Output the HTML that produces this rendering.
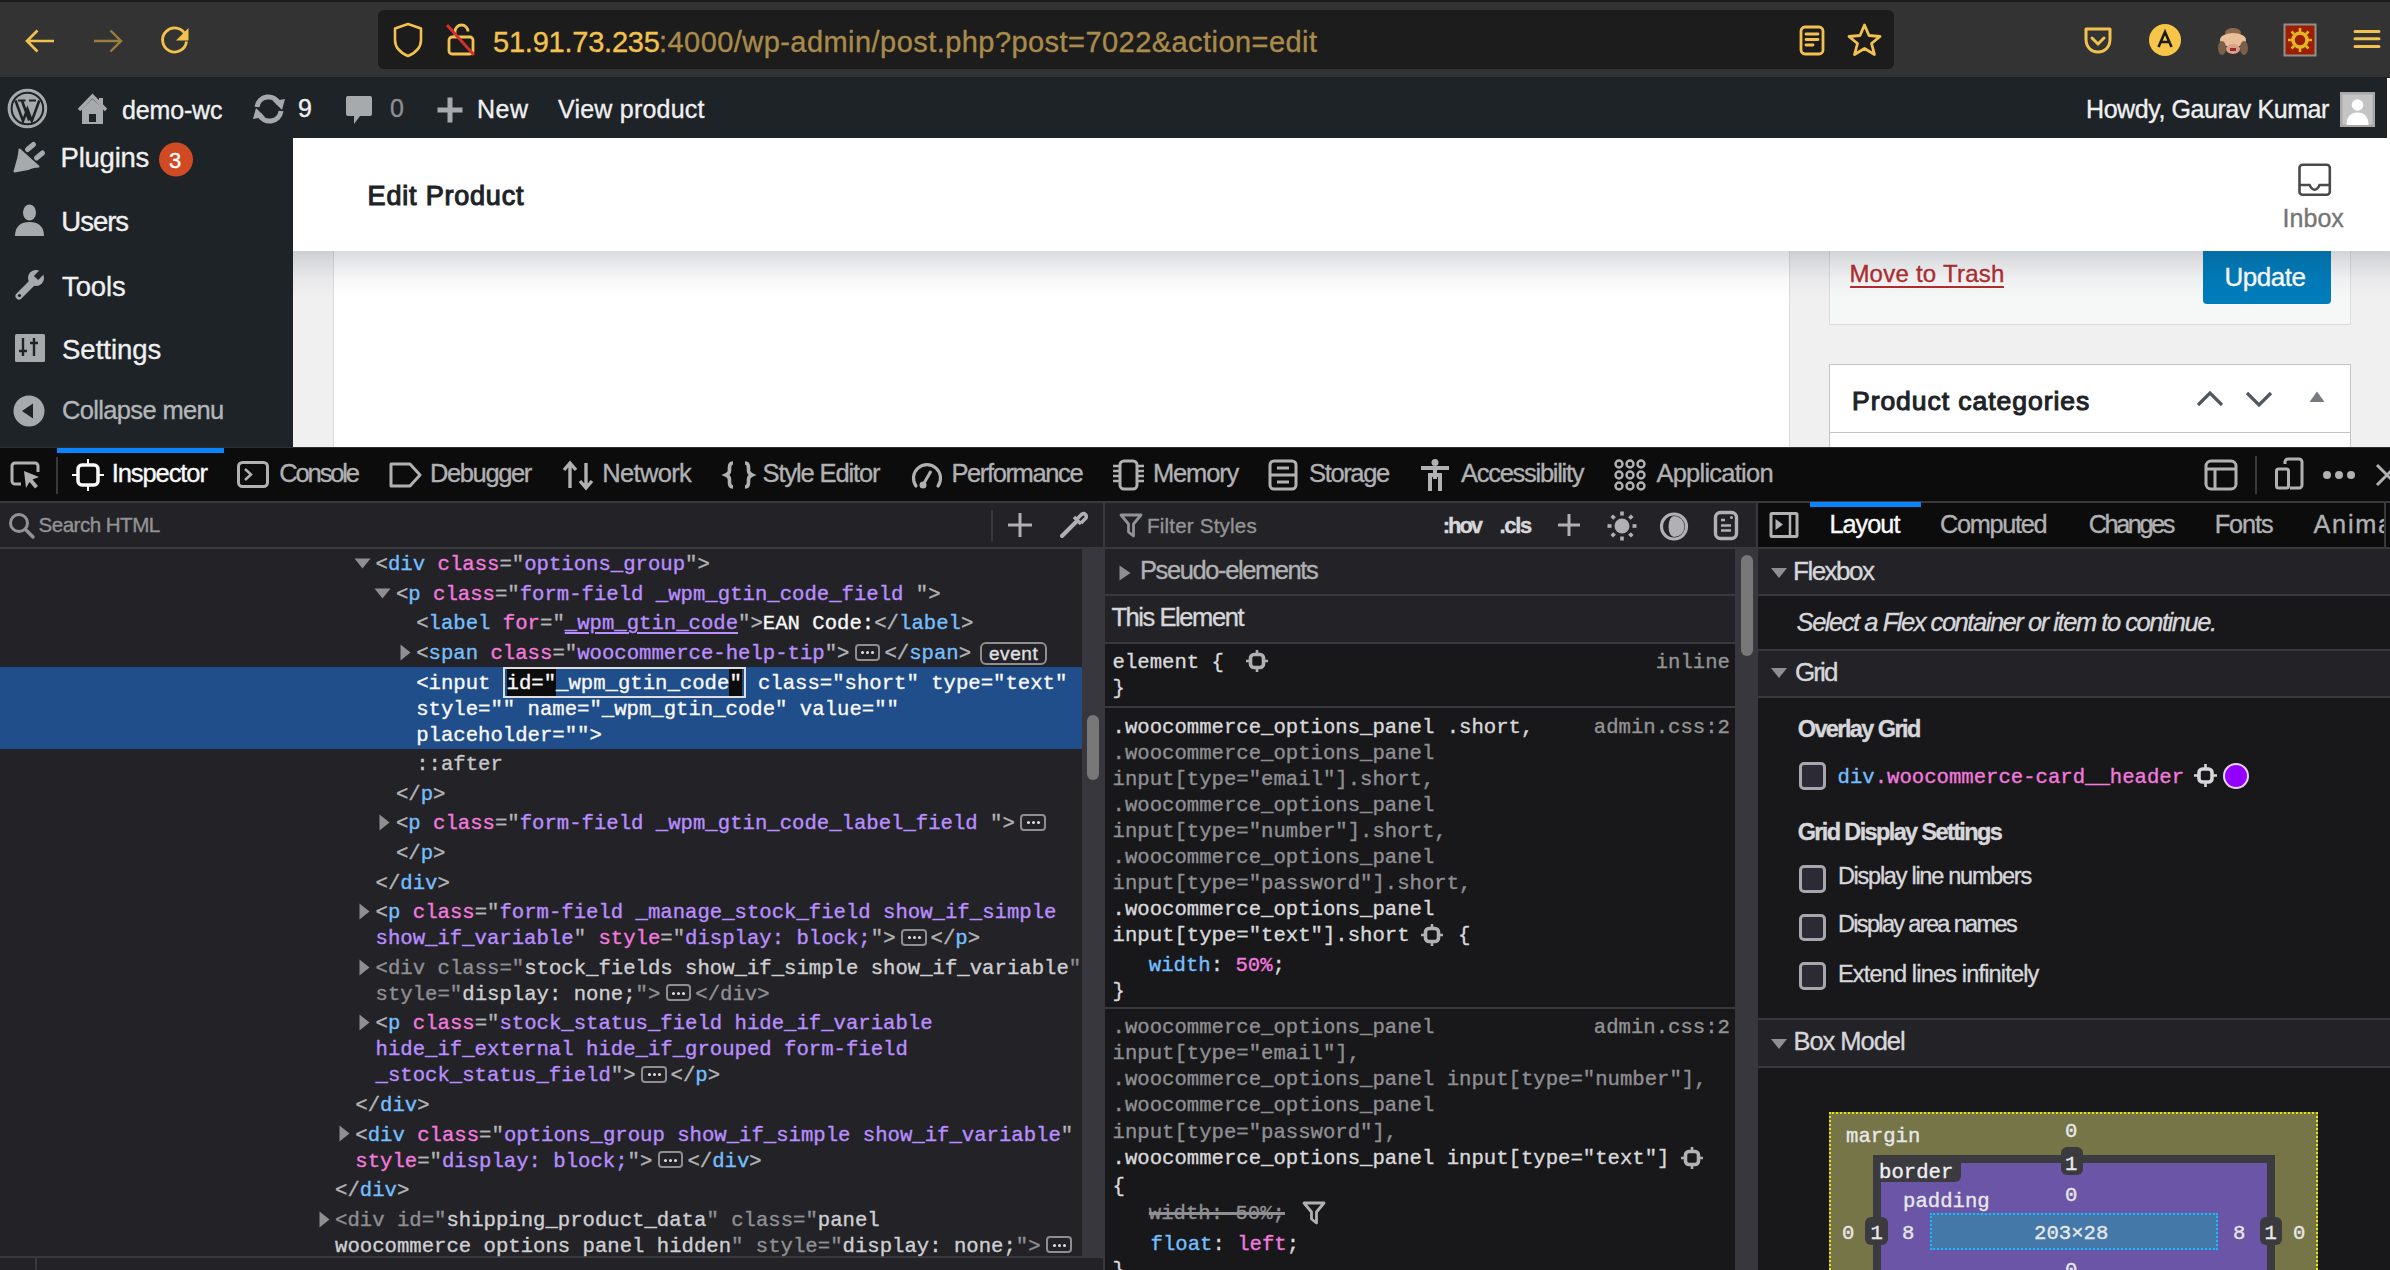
<!DOCTYPE html><html><head><meta charset="utf-8"><style>html,body{margin:0;padding:0;width:2390px;height:1270px;overflow:hidden;background:#232327;position:relative}body>*{box-sizing:border-box} div{-webkit-text-stroke:0.35px currentColor}</style></head><body>
<div style="position:absolute;left:0px;top:0px;width:2390px;height:78px;background:#333333;"></div>
<div style="position:absolute;left:0px;top:0px;width:2390px;height:2px;background:#1c1c1c;"></div>
<div style="position:absolute;left:0px;top:77px;width:2390px;height:1px;background:#1f1f1f;"></div>
<div style="position:absolute;left:378px;top:10px;width:1516px;height:59px;background:#1c1c1c;border-radius:6px;"></div>
<svg style="position:absolute;left:20px;top:24px;" width="40" height="36" viewBox="0 0 40 36"><path d="M34 17H7.5M17.5 6.5L7 17L17.5 27.5" fill="none" stroke="#f2c14e" stroke-width="2.7" stroke-linejoin="miter"/></svg>
<svg style="position:absolute;left:88px;top:24px;" width="40" height="36" viewBox="0 0 40 36"><path d="M6 17H32.5M22.5 6.5L33 17L22.5 27.5" fill="none" stroke="#9a7f3c" stroke-width="2.4" stroke-linejoin="miter"/></svg>
<svg style="position:absolute;left:156px;top:24px;" width="40" height="40" viewBox="0 0 40 40"><path d="M29.5 11A12 12 0 1 0 30.5 17.5" fill="none" stroke="#f2c14e" stroke-width="2.8"/><path d="M32.5 4V16.5H20Z" fill="#f2c14e"/></svg>
<svg style="position:absolute;left:390px;top:20px;" width="36" height="40" viewBox="0 0 36 40"><path d="M18 4L31 8.5V20C31 28 25 33 18 36C11 33 5 28 5 20V8.5Z" fill="none" stroke="#f2c14e" stroke-width="2.6" stroke-linejoin="round"/></svg>
<svg style="position:absolute;left:442px;top:20px;" width="38" height="40" viewBox="0 0 38 40"><path d="M13 17V11.5A6.5 6.5 0 0 1 26 11.5" fill="none" stroke="#f2c14e" stroke-width="2.8"/><rect x="7" y="17" width="24" height="17" rx="3" fill="none" stroke="#f2c14e" stroke-width="2.8"/><path d="M5 5L32 35" stroke="#d0312d" stroke-width="3"/></svg>
<svg style="position:absolute;left:1796px;top:22px;" width="32" height="36" viewBox="0 0 32 36"><rect x="5" y="5" width="22" height="27" rx="4" fill="none" stroke="#f2c14e" stroke-width="2.8"/><path d="M10 12H22M10 17.5H22M10 23H17" stroke="#f2c14e" stroke-width="2.8" stroke-linecap="round"/></svg>
<svg style="position:absolute;left:1845px;top:21px;" width="40" height="38" viewBox="0 0 40 38"><path d="M19.5 4L24 14.5L35 15.5L26.5 22.5L29.5 33.5L19.5 27.5L9.5 33.5L12.5 22.5L4 15.5L15 14.5Z" fill="none" stroke="#f2c14e" stroke-width="2.8" stroke-linejoin="round"/></svg>
<svg style="position:absolute;left:2080px;top:24px;" width="36" height="32" viewBox="0 0 36 32"><path d="M6 5H30V15C30 23 25 28 18 28C11 28 6 23 6 15Z" fill="none" stroke="#f2c14e" stroke-width="3" stroke-linejoin="round"/><path d="M12 14L18 20L24 14" fill="none" stroke="#f2c14e" stroke-width="3" stroke-linecap="round"/></svg>
<svg style="position:absolute;left:2147px;top:22px;" width="36" height="36" viewBox="0 0 36 36"><circle cx="18" cy="18" r="16" fill="#f7c547"/><path d="M11.5 25L18 10L24.5 25M13.8 20H22.2" fill="none" stroke="#1c1c1c" stroke-width="2.6"/></svg>
<svg style="position:absolute;left:2216px;top:24px;" width="34" height="34" viewBox="0 0 34 34"><ellipse cx="17" cy="9" rx="8" ry="5" fill="#8a6a4a"/><ellipse cx="17" cy="16" rx="13" ry="7" fill="#e8bf98"/><ellipse cx="17" cy="25" rx="7" ry="5" fill="#d9a08a"/><ellipse cx="6" cy="24" rx="4" ry="7" fill="#7a6048"/><ellipse cx="28" cy="24" rx="4" ry="7" fill="#7a6048"/><rect x="14" y="24" width="6" height="3" fill="#9b2a2a"/></svg>
<svg style="position:absolute;left:2282px;top:22px;" width="36" height="36" viewBox="0 0 36 36"><rect x="2.5" y="2.5" width="31" height="31" fill="#9d1f00" stroke="#8f8f8f" stroke-width="2"/><circle cx="18" cy="18" r="7" fill="none" stroke="#e2b628" stroke-width="3.5"/><path d="M18 6V10M18 26V30M6 18H10M26 18H30M9.5 9.5L12 12M24 24L26.5 26.5M9.5 26.5L12 24M24 12L26.5 9.5" stroke="#e2b628" stroke-width="2.5"/></svg>
<svg style="position:absolute;left:2350px;top:26px;" width="34" height="26" viewBox="0 0 34 26"><path d="M5 5.5H29M5 12.8H29M5 20.5H29" stroke="#f2c14e" stroke-width="3" stroke-linecap="round"/></svg>
<div style="position:absolute;left:493.00px;top:27.64px;font:normal normal 29px/29px 'Liberation Sans', sans-serif;color:#f2c14e;letter-spacing:-0.227px;white-space:pre;">51.91.73.235</div>
<div style="position:absolute;left:659.00px;top:27.64px;font:normal normal 29px/29px 'Liberation Sans', sans-serif;color:#a98b4c;letter-spacing:0.445px;white-space:pre;">:4000/wp-admin/post.php?post=7022&amp;action=edit</div>
<div style="position:absolute;left:0px;top:78px;width:2390px;height:60px;background:#1d2327;"></div>
<div style="position:absolute;left:2387px;top:78px;width:3px;height:60px;background:#ffffff;"></div>
<svg style="position:absolute;left:6px;top:87px;" width="43" height="43" viewBox="0 0 43 43"><circle cx="21.4" cy="21.5" r="18.3" fill="none" stroke="#a7aaad" stroke-width="3"/><circle cx="21.4" cy="21.5" r="14.8" fill="#a7aaad"/><path d="M9.5 13.5L17 34L21.4 22L25.8 34L33.3 13.5M15.8 13.2L23.2 33.5" fill="none" stroke="#1d2327" stroke-width="2.6"/><path d="M12 13.5H19.5M23 13.5H30" stroke="#1d2327" stroke-width="2.2"/></svg>
<svg style="position:absolute;left:77px;top:93px;" width="32" height="34" viewBox="0 0 32 34"><path d="M2 17L15.5 3L29 17" fill="none" stroke="#a7aaad" stroke-width="3.5"/><path d="M5 16L15.5 6L26 16V31H5Z" fill="#a7aaad"/><rect x="12" y="21" width="7" height="8" fill="#1d2327"/><rect x="22" y="5" width="4" height="8" fill="#a7aaad"/></svg>
<svg style="position:absolute;left:250px;top:93px;" width="38" height="32" viewBox="0 0 38 32"><path d="M7 14A11.5 11.5 0 0 1 29 11" fill="none" stroke="#a7aaad" stroke-width="5"/><path d="M31 18A11.5 11.5 0 0 1 9 21" fill="none" stroke="#a7aaad" stroke-width="5"/><path d="M23 8L35 6L32 17Z" fill="#a7aaad"/><path d="M15 24L3 26L6 15Z" fill="#a7aaad"/></svg>
<svg style="position:absolute;left:344px;top:93px;" width="30" height="34" viewBox="0 0 30 34"><path d="M4 3H26A2 2 0 0 1 28 5V21A2 2 0 0 1 26 23H16L10 31V23H4A2 2 0 0 1 2 21V5A2 2 0 0 1 4 3Z" fill="#a7aaad"/></svg>
<svg style="position:absolute;left:435px;top:95px;" width="30" height="30" viewBox="0 0 30 30"><path d="M15 2.5V27.5M2.5 15H27.5" stroke="#a7aaad" stroke-width="5"/></svg>
<div style="position:absolute;left:122.00px;top:97.50px;font:normal normal 25px/25px 'Liberation Sans', sans-serif;color:#f0f0f1;letter-spacing:-0.153px;white-space:pre;">demo-wc</div>
<div style="position:absolute;left:298.00px;top:96.00px;font:normal normal 25px/25px 'Liberation Sans', sans-serif;color:#f0f0f1;letter-spacing:0.000px;white-space:pre;">9</div>
<div style="position:absolute;left:390.00px;top:96.00px;font:normal normal 25px/25px 'Liberation Sans', sans-serif;color:#8c8f94;letter-spacing:0.000px;white-space:pre;">0</div>
<div style="position:absolute;left:477.00px;top:96.50px;font:normal normal 25px/25px 'Liberation Sans', sans-serif;color:#f0f0f1;letter-spacing:0.521px;white-space:pre;">New</div>
<div style="position:absolute;left:558.00px;top:96.50px;font:normal normal 25px/25px 'Liberation Sans', sans-serif;color:#f0f0f1;letter-spacing:0.225px;white-space:pre;">View product</div>
<div style="position:absolute;left:2086.00px;top:97.00px;font:normal normal 25px/25px 'Liberation Sans', sans-serif;color:#f0f0f1;letter-spacing:-0.427px;white-space:pre;">Howdy, Gaurav Kumar</div>
<svg style="position:absolute;left:2339.5px;top:91.5px;" width="35" height="35" viewBox="0 0 35 35"><rect x="1.2" y="1.2" width="32.6" height="32.6" fill="#c4c4c4" stroke="#a8a8a8" stroke-width="2.4"/><circle cx="17.5" cy="13" r="5.8" fill="#fff"/><path d="M6.5 33C6.5 24.5 11 20.5 17.5 20.5C24 20.5 28.5 24.5 28.5 33Z" fill="#fff"/></svg>
<div style="position:absolute;left:0px;top:138px;width:293px;height:309px;background:#1d2327;"></div>
<svg style="position:absolute;left:12px;top:140px;" width="36" height="36" viewBox="0 0 36 36"><path d="M2.5 31.5L6 19C7 15 7.5 12 7.5 9.5L26.5 26.5C24 26.5 20 27.5 16 29Z" fill="#a7aaad" stroke="#a7aaad" stroke-width="2" stroke-linejoin="round"/><path d="M15.5 9.5L21.5 4.5M24.5 18L30.5 13" stroke="#a7aaad" stroke-width="5" stroke-linecap="round"/></svg>
<div style="position:absolute;left:60.60px;top:143.90px;font:normal normal 27.5px/27.5px 'Liberation Sans', sans-serif;color:#f0f0f1;letter-spacing:-0.241px;white-space:pre;">Plugins</div>
<svg style="position:absolute;left:158px;top:142px;" width="36" height="36" viewBox="0 0 36 36"><circle cx="18" cy="17.5" r="17" fill="#d04b23"/></svg>
<div style="position:absolute;left:169.00px;top:149.52px;font:normal normal 22px/22px 'Liberation Sans', sans-serif;color:#ffffff;letter-spacing:0.000px;white-space:pre;">3</div>
<svg style="position:absolute;left:13px;top:203px;" width="33" height="36" viewBox="0 0 33 36"><ellipse cx="16.5" cy="9.5" rx="6.5" ry="8" fill="#a7aaad"/><path d="M2 33C2 23 8 19 16.5 19C25 19 31 23 31 33Z" fill="#a7aaad"/></svg>
<div style="position:absolute;left:61.30px;top:207.90px;font:normal normal 27.5px/27.5px 'Liberation Sans', sans-serif;color:#f0f0f1;letter-spacing:-1.015px;white-space:pre;">Users</div>
<svg style="position:absolute;left:12px;top:267px;" width="36" height="36" viewBox="0 0 36 36"><path d="M7 29L21 15" stroke="#a7aaad" stroke-width="7" stroke-linecap="round"/><circle cx="24" cy="11" r="8" fill="#a7aaad"/><path d="M24 11L33 2" stroke="#1d2327" stroke-width="6"/><circle cx="7.5" cy="28.5" r="1.6" fill="#1d2327"/></svg>
<div style="position:absolute;left:62.00px;top:272.90px;font:normal normal 27.5px/27.5px 'Liberation Sans', sans-serif;color:#f0f0f1;letter-spacing:-0.112px;white-space:pre;">Tools</div>
<svg style="position:absolute;left:13px;top:332px;" width="34" height="32" viewBox="0 0 34 32"><rect x="2" y="2" width="30" height="28" rx="1.5" fill="#a7aaad"/><path d="M10 6V24M21 6V24M6 19H14M17 11H25" stroke="#1d2327" stroke-width="2.4"/></svg>
<div style="position:absolute;left:62.00px;top:336.10px;font:normal normal 27.5px/27.5px 'Liberation Sans', sans-serif;color:#f0f0f1;letter-spacing:-0.002px;white-space:pre;">Settings</div>
<svg style="position:absolute;left:11px;top:394px;" width="36" height="36" viewBox="0 0 36 36"><circle cx="18" cy="17" r="15.5" fill="#a7aaad"/><path d="M22 9.5V24.5L11 17Z" fill="#1d2327"/></svg>
<div style="position:absolute;left:62.00px;top:397.58px;font:normal normal 25.5px/25.5px 'Liberation Sans', sans-serif;color:#b4b6b9;letter-spacing:-0.659px;white-space:pre;">Collapse menu</div>
<div style="position:absolute;left:293px;top:138px;width:2097px;height:113px;background:#ffffff;"></div>
<div style="position:absolute;left:367.60px;top:183.12px;font:normal normal 27px/27px 'Liberation Sans', sans-serif;color:#1d2327;letter-spacing:0.802px;white-space:pre;-webkit-text-stroke:1.1px #1d2327;">Edit Product</div>
<svg style="position:absolute;left:2294px;top:160px;" width="40" height="40" viewBox="0 0 40 40"><rect x="5.5" y="4.8" width="30.3" height="29.9" rx="3" fill="none" stroke="#4a4a4a" stroke-width="2.6"/><path d="M5.5 25H15.6C17 28 18.5 29.7 20.6 29.7C22.7 29.7 24.2 28 25.6 25H35.8" fill="none" stroke="#4a4a4a" stroke-width="2.6"/></svg>
<div style="position:absolute;left:2282.60px;top:205.70px;font:normal normal 25px/25px 'Liberation Sans', sans-serif;color:#757575;letter-spacing:0.011px;white-space:pre;">Inbox</div>
<div style="position:absolute;left:293px;top:251px;width:2097px;height:196px;background:#f0f0f1;"></div>
<div style="position:absolute;left:333px;top:251px;width:1457px;height:196px;background:#ffffff;border-left:1px solid #dcdcde;border-right:1px solid #dcdcde;"></div>
<div style="position:absolute;left:1829px;top:251px;width:522px;height:74px;background:#f6f7f7;border:1px solid #dcdcde;border-top:none;"></div>
<div style="position:absolute;left:1849.40px;top:261.84px;font:normal normal 24px/24px 'Liberation Sans', sans-serif;color:#b32d2e;letter-spacing:0.238px;white-space:pre;">Move to Trash</div>
<div style="position:absolute;left:1850px;top:285.5px;width:154px;height:2px;background:#b32d2e;"></div>
<div style="position:absolute;left:2203px;top:251px;width:128px;height:53px;background:#007cba;border-radius:0 0 4px 4px;"></div>
<div style="position:absolute;left:2224.50px;top:263.56px;font:normal normal 26px/26px 'Liberation Sans', sans-serif;color:#ffffff;letter-spacing:-0.476px;white-space:pre;">Update</div>
<div style="position:absolute;left:1829px;top:364px;width:522px;height:90px;background:#ffffff;border:1px solid #c3c4c7;"></div>
<div style="position:absolute;left:1830px;top:432px;width:520px;height:1px;background:#c3c4c7;"></div>
<div style="position:absolute;left:1852.00px;top:387.74px;font:normal normal 26.5px/26.5px 'Liberation Sans', sans-serif;color:#1d2327;letter-spacing:0.959px;white-space:pre;-webkit-text-stroke:1.1px #1d2327;">Product categories</div>
<svg style="position:absolute;left:2194px;top:387px;" width="32" height="24" viewBox="0 0 32 24"><path d="M4 18L16 6L28 18" fill="none" stroke="#50575e" stroke-width="3.2"/></svg>
<svg style="position:absolute;left:2243px;top:387px;" width="32" height="24" viewBox="0 0 32 24"><path d="M4 6L16 18L28 6" fill="none" stroke="#50575e" stroke-width="3.2"/></svg>
<svg style="position:absolute;left:2306px;top:388px;" width="22" height="18" viewBox="0 0 22 18"><path d="M3.5 14H18.5L11 3.5Z" fill="#787c82"/></svg>
<div style="position:absolute;left:293px;top:251px;width:2097px;height:48px;background:linear-gradient(to bottom, rgba(20,30,50,0.16), rgba(20,30,50,0.10) 25%, rgba(20,30,50,0.03) 60%, rgba(20,30,50,0));"></div>
<div style="position:absolute;left:0px;top:447px;width:2390px;height:823px;background:#232327;"></div>
<div style="position:absolute;left:0px;top:447px;width:2390px;height:54px;background:#0c0c0d;"></div>
<div style="position:absolute;left:0px;top:447px;width:2390px;height:1px;background:#2e2e33;"></div>
<div style="position:absolute;left:57px;top:448px;width:167px;height:5px;background:#0a84ff;"></div>
<div style="position:absolute;left:0px;top:501px;width:2390px;height:2px;background:#38383d;"></div>
<svg style="position:absolute;left:8px;top:459px;" width="36" height="32" viewBox="0 0 36 32"><path d="M13 25H7A3 3 0 0 1 4 22V7A3 3 0 0 1 7 4H27A3 3 0 0 1 30 7V13" fill="none" stroke="#b1b1b3" stroke-width="3"/><path d="M16 12L31 18L24.5 20.5L30 27L27 29.5L21.5 23L18 29Z" fill="#b1b1b3"/></svg>
<div style="position:absolute;left:55.5px;top:457px;width:2px;height:37px;background:#38383d;"></div>
<svg style="position:absolute;left:70px;top:457px;" width="36" height="36" viewBox="0 0 36 36"><rect x="8" y="8" width="20" height="20" rx="4" fill="none" stroke="#f9f9fa" stroke-width="3.5"/><path d="M18 2V7M18 29V34M2 18H7M29 18H34" stroke="#f9f9fa" stroke-width="2"/></svg>
<div style="position:absolute;left:111.80px;top:461.28px;font:normal normal 25.5px/25.5px 'Liberation Sans', sans-serif;color:#f9f9fa;letter-spacing:-1.100px;white-space:pre;">Inspector</div>
<svg style="position:absolute;left:235px;top:459px;" width="36" height="32" viewBox="0 0 36 32"><rect x="3.5" y="3.5" width="29" height="24" rx="4" fill="none" stroke="#b1b1b3" stroke-width="3"/><path d="M10 10L16 15.5L10 21" fill="none" stroke="#b1b1b3" stroke-width="2.5"/></svg>
<div style="position:absolute;left:279.30px;top:461.28px;font:normal normal 25.5px/25.5px 'Liberation Sans', sans-serif;color:#b1b1b3;letter-spacing:-2.146px;white-space:pre;">Console</div>
<svg style="position:absolute;left:387px;top:459px;" width="38" height="32" viewBox="0 0 38 32"><path d="M4 5H23L33 16L23 27H4Z" fill="none" stroke="#b1b1b3" stroke-width="3" stroke-linejoin="round"/></svg>
<div style="position:absolute;left:430.00px;top:461.28px;font:normal normal 25.5px/25.5px 'Liberation Sans', sans-serif;color:#b1b1b3;letter-spacing:-1.387px;white-space:pre;">Debugger</div>
<svg style="position:absolute;left:560px;top:457px;" width="36" height="36" viewBox="0 0 36 36"><path d="M10 31V7M4 13L10 6L16 13M26 6V30M20 24L26 31L32 24" fill="none" stroke="#b1b1b3" stroke-width="3.4"/></svg>
<div style="position:absolute;left:602.30px;top:461.28px;font:normal normal 25.5px/25.5px 'Liberation Sans', sans-serif;color:#b1b1b3;letter-spacing:-0.678px;white-space:pre;">Network</div>
<svg style="position:absolute;left:721px;top:457px;" width="36" height="36" viewBox="0 0 36 36"><path d="M12 6C8 6 8.5 10 8.5 13.5C8.5 16.5 5 18 5 18C5 18 8.5 19.5 8.5 22.5C8.5 26 8 30 12 30M24 6C28 6 27.5 10 27.5 13.5C27.5 16.5 31 18 31 18C31 18 27.5 19.5 27.5 22.5C27.5 26 28 30 24 30" fill="none" stroke="#b1b1b3" stroke-width="3.6"/></svg>
<div style="position:absolute;left:762.60px;top:461.28px;font:normal normal 25.5px/25.5px 'Liberation Sans', sans-serif;color:#b1b1b3;letter-spacing:-1.136px;white-space:pre;">Style Editor</div>
<svg style="position:absolute;left:909px;top:457px;" width="36" height="36" viewBox="0 0 36 36"><path d="M7 29A13.5 13.5 0 1 1 29 29" fill="none" stroke="#b1b1b3" stroke-width="3.2" stroke-linecap="round"/><path d="M14 28L22 14" stroke="#b1b1b3" stroke-width="3"/><circle cx="14" cy="28" r="3.5" fill="#b1b1b3"/></svg>
<div style="position:absolute;left:951.40px;top:461.28px;font:normal normal 25.5px/25.5px 'Liberation Sans', sans-serif;color:#b1b1b3;letter-spacing:-1.380px;white-space:pre;">Performance</div>
<svg style="position:absolute;left:1110px;top:457px;" width="37" height="36" viewBox="0 0 37 36"><rect x="10" y="4" width="17" height="28" rx="4" fill="none" stroke="#b1b1b3" stroke-width="3"/><path d="M3 9H9M3 14H9M3 19H9M3 24H9M28 9H34M28 14H34M28 19H34M28 24H34" stroke="#b1b1b3" stroke-width="2.5"/></svg>
<div style="position:absolute;left:1152.90px;top:461.28px;font:normal normal 25.5px/25.5px 'Liberation Sans', sans-serif;color:#b1b1b3;letter-spacing:-1.128px;white-space:pre;">Memory</div>
<svg style="position:absolute;left:1266px;top:457px;" width="34" height="36" viewBox="0 0 34 36"><rect x="4" y="4" width="26" height="28" rx="4" fill="none" stroke="#b1b1b3" stroke-width="3"/><path d="M4 18H30M11 11H23M11 25H23" stroke="#b1b1b3" stroke-width="3"/></svg>
<div style="position:absolute;left:1309.00px;top:461.28px;font:normal normal 25.5px/25.5px 'Liberation Sans', sans-serif;color:#b1b1b3;letter-spacing:-1.355px;white-space:pre;">Storage</div>
<svg style="position:absolute;left:1418px;top:457px;" width="34" height="36" viewBox="0 0 34 36"><circle cx="17" cy="5.5" r="3.5" fill="#b1b1b3"/><path d="M3 11H31M17 11V22M12 34V18H22V34" fill="none" stroke="#b1b1b3" stroke-width="4"/></svg>
<div style="position:absolute;left:1461.00px;top:461.28px;font:normal normal 25.5px/25.5px 'Liberation Sans', sans-serif;color:#b1b1b3;letter-spacing:-1.276px;white-space:pre;">Accessibility</div>
<svg style="position:absolute;left:1613px;top:457px;" width="35" height="36" viewBox="0 0 35 36"><circle cx="6" cy="7" r="3.5" fill="none" stroke="#b1b1b3" stroke-width="2.4"/><circle cx="6" cy="18" r="3.5" fill="none" stroke="#b1b1b3" stroke-width="2.4"/><circle cx="6" cy="29" r="3.5" fill="none" stroke="#b1b1b3" stroke-width="2.4"/><circle cx="17" cy="7" r="3.5" fill="none" stroke="#b1b1b3" stroke-width="2.4"/><circle cx="17" cy="18" r="3.5" fill="none" stroke="#b1b1b3" stroke-width="2.4"/><circle cx="17" cy="29" r="3.5" fill="none" stroke="#b1b1b3" stroke-width="2.4"/><circle cx="28" cy="7" r="3.5" fill="none" stroke="#b1b1b3" stroke-width="2.4"/><circle cx="28" cy="18" r="3.5" fill="none" stroke="#b1b1b3" stroke-width="2.4"/><circle cx="28" cy="29" r="3.5" fill="none" stroke="#b1b1b3" stroke-width="2.4"/></svg>
<div style="position:absolute;left:1656.40px;top:461.28px;font:normal normal 25.5px/25.5px 'Liberation Sans', sans-serif;color:#b1b1b3;letter-spacing:-0.757px;white-space:pre;">Application</div>
<svg style="position:absolute;left:2202px;top:457px;" width="38" height="36" viewBox="0 0 38 36"><rect x="4" y="4" width="30" height="28" rx="5" fill="none" stroke="#b1b1b3" stroke-width="3"/><path d="M4 12H34M13 12V32" stroke="#b1b1b3" stroke-width="3"/></svg>
<div style="position:absolute;left:2254.5px;top:456px;width:2px;height:38px;background:#38383d;"></div>
<svg style="position:absolute;left:2272px;top:457px;" width="36" height="36" viewBox="0 0 36 36"><path d="M13 7V5A3 3 0 0 1 16 2H27A3 3 0 0 1 30 5V28A3 3 0 0 1 27 31H18" fill="none" stroke="#b1b1b3" stroke-width="3"/><rect x="4.5" y="12" width="12" height="19" rx="2" fill="none" stroke="#b1b1b3" stroke-width="3"/></svg>
<svg style="position:absolute;left:2320px;top:463px;" width="38" height="24" viewBox="0 0 38 24"><circle cx="7" cy="12" r="4" fill="#b1b1b3"/><circle cx="19" cy="12" r="4" fill="#b1b1b3"/><circle cx="31" cy="12" r="4" fill="#b1b1b3"/></svg>
<svg style="position:absolute;left:2372px;top:460px;" width="18" height="30" viewBox="0 0 18 30"><path d="M5 5L25 25M25 5L5 25" stroke="#b1b1b3" stroke-width="3"/></svg>
<div style="position:absolute;left:0px;top:503px;width:1757px;height:44px;background:#232327;"></div>
<div style="position:absolute;left:1758px;top:503px;width:632px;height:44px;background:#0c0c0d;"></div>
<div style="position:absolute;left:0px;top:547px;width:2390px;height:2px;background:#38383d;"></div>
<div style="position:absolute;left:1103px;top:503px;width:2px;height:767px;background:#38383d;"></div>
<div style="position:absolute;left:1756px;top:503px;width:2px;height:767px;background:#38383d;"></div>
<svg style="position:absolute;left:6px;top:510px;" width="32" height="32" viewBox="0 0 32 32"><circle cx="13" cy="13" r="8.5" fill="none" stroke="#939395" stroke-width="3"/><path d="M19.5 19.5L27 27" stroke="#939395" stroke-width="3.5" stroke-linecap="round"/></svg>
<div style="position:absolute;left:38.50px;top:514.70px;font:normal normal 20.6px/20.6px 'Liberation Sans', sans-serif;color:#939395;letter-spacing:-0.528px;white-space:pre;">Search HTML</div>
<div style="position:absolute;left:991px;top:510px;width:2px;height:31px;background:#38383d;"></div>
<svg style="position:absolute;left:1004px;top:509px;" width="32" height="32" viewBox="0 0 32 32"><path d="M16 4V28M4 16H28" stroke="#b1b1b3" stroke-width="3"/></svg>
<svg style="position:absolute;left:1057px;top:509px;" width="32" height="32" viewBox="0 0 32 32"><path d="M5 27L19 13" stroke="#b1b1b3" stroke-width="4" stroke-linecap="round"/><path d="M17 8L24 15M20 10L25 5A3 3 0 0 1 29 9L24 14" fill="none" stroke="#b1b1b3" stroke-width="3.5"/></svg>
<svg style="position:absolute;left:1118px;top:511px;" width="26" height="28" viewBox="0 0 26 28"><path d="M3 4H23L15.5 13V25L10.5 21V13Z" fill="none" stroke="#939395" stroke-width="2.8" stroke-linejoin="round"/></svg>
<div style="position:absolute;left:1147.00px;top:515.70px;font:normal normal 20.6px/20.6px 'Liberation Sans', sans-serif;color:#939395;letter-spacing:0.186px;white-space:pre;">Filter Styles</div>
<div style="position:absolute;left:1442.80px;top:514.52px;font:normal bold 22px/22px 'Liberation Sans', sans-serif;color:#d7d7db;letter-spacing:-2.068px;white-space:pre;">:hov</div>
<div style="position:absolute;left:1499.50px;top:514.52px;font:normal bold 22px/22px 'Liberation Sans', sans-serif;color:#d7d7db;letter-spacing:-1.320px;white-space:pre;">.cls</div>
<svg style="position:absolute;left:1554px;top:509px;" width="30" height="32" viewBox="0 0 30 32"><path d="M15 5V27M4 16H26" stroke="#b1b1b3" stroke-width="3"/></svg>
<svg style="position:absolute;left:1604px;top:508px;" width="36" height="36" viewBox="0 0 36 36"><circle cx="18" cy="18" r="7.5" fill="#b1b1b3"/><path d="M28.5 18.0L32.5 18.0" stroke="#b1b1b3" stroke-width="3.6"/><path d="M25.4 25.4L28.3 28.3" stroke="#b1b1b3" stroke-width="3.6"/><path d="M18.0 28.5L18.0 32.5" stroke="#b1b1b3" stroke-width="3.6"/><path d="M10.6 25.4L7.7 28.3" stroke="#b1b1b3" stroke-width="3.6"/><path d="M7.5 18.0L3.5 18.0" stroke="#b1b1b3" stroke-width="3.6"/><path d="M10.6 10.6L7.7 7.7" stroke="#b1b1b3" stroke-width="3.6"/><path d="M18.0 7.5L18.0 3.5" stroke="#b1b1b3" stroke-width="3.6"/><path d="M25.4 10.6L28.3 7.7" stroke="#b1b1b3" stroke-width="3.6"/></svg>
<svg style="position:absolute;left:1656px;top:508px;" width="36" height="36" viewBox="0 0 36 36"><circle cx="18" cy="18.5" r="12.5" fill="none" stroke="#b1b1b3" stroke-width="3.2"/><path d="M18 8A10.5 10.5 0 0 1 18 29A5.5 10.5 0 0 1 18 8Z" fill="#b1b1b3"/></svg>
<svg style="position:absolute;left:1709px;top:508px;" width="34" height="36" viewBox="0 0 34 36"><rect x="6.5" y="4.5" width="21" height="26" rx="5" fill="none" stroke="#b1b1b3" stroke-width="3.4"/><path d="M12 12H16M12 17.5H22M12 22.5H22" stroke="#b1b1b3" stroke-width="2.6"/><circle cx="22.5" cy="9.5" r="1.5" fill="#b1b1b3"/></svg>
<svg style="position:absolute;left:1767px;top:510px;" width="34" height="30" viewBox="0 0 34 30"><rect x="4" y="3.5" width="26" height="23" rx="1" fill="none" stroke="#b1b1b3" stroke-width="3"/><path d="M23 4V26" stroke="#b1b1b3" stroke-width="2.5"/><path d="M8.5 9V20L16 14.5Z" fill="#b1b1b3"/></svg>
<div style="position:absolute;left:1810px;top:502px;width:111px;height:5px;background:#0a84ff;"></div>
<div style="position:absolute;left:1829.40px;top:511.75px;font:normal normal 25.3px/25.3px 'Liberation Sans', sans-serif;color:#f9f9fa;letter-spacing:-0.985px;white-space:pre;">Layout</div>
<div style="position:absolute;left:1940.00px;top:511.75px;font:normal normal 25.3px/25.3px 'Liberation Sans', sans-serif;color:#b1b1b3;letter-spacing:-1.321px;white-space:pre;">Computed</div>
<div style="position:absolute;left:2088.70px;top:511.75px;font:normal normal 25.3px/25.3px 'Liberation Sans', sans-serif;color:#b1b1b3;letter-spacing:-2.436px;white-space:pre;">Changes</div>
<div style="position:absolute;left:2214.70px;top:511.75px;font:normal normal 25.3px/25.3px 'Liberation Sans', sans-serif;color:#b1b1b3;letter-spacing:-1.080px;white-space:pre;">Fonts</div>
<div style="position:absolute;left:2300px;top:503px;width:84px;height:44px;overflow:hidden">
<div style="position:absolute;left:13.50px;top:8.75px;font:normal normal 25.3px/25.3px 'Liberation Sans', sans-serif;color:#b1b1b3;letter-spacing:1.723px;white-space:pre;">Animations</div>
</div>
<div style="position:absolute;left:2384px;top:503px;width:2px;height:44px;background:#38383d;"></div>
<div style="position:absolute;left:1082px;top:549px;width:23px;height:707px;background:#38373d;"></div>
<div style="position:absolute;left:1087.3px;top:715px;width:12px;height:65px;background:#787878;border-radius:6px;"></div>
<div style="position:absolute;left:0px;top:667px;width:1082px;height:82px;background:#204e8a;"></div>
<div style="position:absolute;left:0px;top:1256px;width:2390px;height:2px;background:#38383d;"></div>
<div style="position:absolute;left:35px;top:1258px;width:2px;height:12px;background:#38383d;"></div>
<div style="position:absolute;left:1105px;top:549px;width:630px;height:45px;background:#232327;"></div>
<div style="position:absolute;left:1105px;top:594px;width:630px;height:2px;background:#38383d;"></div>
<div style="position:absolute;left:1105px;top:596px;width:630px;height:46px;background:#232327;"></div>
<div style="position:absolute;left:1105px;top:642px;width:630px;height:2px;background:#38383d;"></div>
<div style="position:absolute;left:1105px;top:644px;width:630px;height:62px;background:#18181a;"></div>
<div style="position:absolute;left:1105px;top:706px;width:630px;height:2px;background:#38383d;"></div>
<div style="position:absolute;left:1105px;top:708px;width:630px;height:299px;background:#18181a;"></div>
<div style="position:absolute;left:1105px;top:1007px;width:630px;height:2px;background:#38383d;"></div>
<div style="position:absolute;left:1105px;top:1009px;width:630px;height:261px;background:#18181a;"></div>
<div style="position:absolute;left:1735px;top:549px;width:23px;height:721px;background:#38373d;"></div>
<div style="position:absolute;left:1741px;top:555px;width:12px;height:101px;background:#787878;border-radius:6px;"></div>
<div style="position:absolute;left:1758px;top:549px;width:632px;height:45px;background:#232327;"></div>
<div style="position:absolute;left:1758px;top:594px;width:632px;height:2px;background:#38383d;"></div>
<div style="position:absolute;left:1758px;top:596px;width:632px;height:53px;background:#18181a;"></div>
<div style="position:absolute;left:1758px;top:649px;width:632px;height:2px;background:#38383d;"></div>
<div style="position:absolute;left:1758px;top:651px;width:632px;height:45px;background:#232327;"></div>
<div style="position:absolute;left:1758px;top:696px;width:632px;height:2px;background:#38383d;"></div>
<div style="position:absolute;left:1758px;top:698px;width:632px;height:320px;background:#18181a;"></div>
<div style="position:absolute;left:1758px;top:1018px;width:632px;height:2px;background:#38383d;"></div>
<div style="position:absolute;left:1758px;top:1020px;width:632px;height:46px;background:#232327;"></div>
<div style="position:absolute;left:1758px;top:1066px;width:632px;height:2px;background:#38383d;"></div>
<div style="position:absolute;left:1758px;top:1068px;width:632px;height:202px;background:#18181a;"></div>
<svg style="position:absolute;left:354.1px;top:557px;" width="17" height="12" viewBox="0 0 17 12"><path d="M0.5 1.5H16.5L8.5 11.5Z" fill="#8f8f92"/></svg>
<div style="position:absolute;left:375.60px;top:552.26px;font:20.630px/26px 'Liberation Mono', monospace;white-space:pre;"><span style="color:#b4b4b8;">&lt;</span><span style="color:#75bfff;">div</span><span style="color:#b4b4b8;"> </span><span style="color:#f27ade;">class</span><span style="color:#b4b4b8;">=&quot;</span><span style="color:#b98eff;">options_group</span><span style="color:#b4b4b8;">&quot;</span><span style="color:#b4b4b8;">&gt;</span></div>
<svg style="position:absolute;left:374.4px;top:586.6px;" width="17" height="12" viewBox="0 0 17 12"><path d="M0.5 1.5H16.5L8.5 11.5Z" fill="#8f8f92"/></svg>
<div style="position:absolute;left:395.90px;top:581.86px;font:20.630px/26px 'Liberation Mono', monospace;white-space:pre;"><span style="color:#b4b4b8;">&lt;</span><span style="color:#75bfff;">p</span><span style="color:#b4b4b8;"> </span><span style="color:#f27ade;">class</span><span style="color:#b4b4b8;">=&quot;</span><span style="color:#b98eff;">form-field _wpm_gtin_code_field </span><span style="color:#b4b4b8;">&quot;</span><span style="color:#b4b4b8;">&gt;</span></div>
<div style="position:absolute;left:416.20px;top:611.46px;font:20.630px/26px 'Liberation Mono', monospace;white-space:pre;"><span style="color:#b4b4b8;">&lt;</span><span style="color:#75bfff;">label</span><span style="color:#b4b4b8;"> </span><span style="color:#f27ade;">for</span><span style="color:#b4b4b8;">=&quot;</span><span style="color:#b98eff;text-decoration:underline;text-decoration-thickness:2px;text-underline-offset:3px">_wpm_gtin_code</span><span style="color:#b4b4b8;">&quot;</span><span style="color:#b4b4b8;">&gt;</span><span style="color:#f9f9fa;">EAN Code:</span><span style="color:#b4b4b8;">&lt;/</span><span style="color:#75bfff;">label</span><span style="color:#b4b4b8;">&gt;</span></div>
<svg style="position:absolute;left:399.7px;top:643.8000000000001px;" width="11" height="17" viewBox="0 0 11 17"><path d="M0.5 0.5V16.5L10.5 8.5Z" fill="#8f8f92"/></svg>
<div style="position:absolute;left:416.20px;top:641.06px;font:20.630px/26px 'Liberation Mono', monospace;white-space:pre;"><span style="color:#b4b4b8;">&lt;</span><span style="color:#75bfff;">span</span><span style="color:#b4b4b8;"> </span><span style="color:#f27ade;">class</span><span style="color:#b4b4b8;">=&quot;</span><span style="color:#b98eff;">woocommerce-help-tip</span><span style="color:#b4b4b8;">&quot;</span><span style="color:#b4b4b8;">&gt;</span><span style="display:inline-block;box-sizing:border-box;width:25.5px;height:17px;margin:0 4px 0 5.5px;border:2px solid #8e8e91;border-radius:4px;vertical-align:-1.5px;position:relative"><span style="position:absolute;left:9.5px;top:5.5px;width:3px;height:3px;background:#e0e0e2;border-radius:2px;box-shadow:-5px 0 #e0e0e2,5px 0 #e0e0e2"></span></span><span style="color:#b4b4b8;">&lt;/</span><span style="color:#75bfff;">span</span><span style="color:#b4b4b8;">&gt;</span><span style="display:inline-block;box-sizing:border-box;width:67.5px;height:23px;margin-left:8.8px;border:2px solid #8e8e91;border-radius:6px;vertical-align:-1px;font:19px/19px 'Liberation Sans', sans-serif;color:#e0e0e2;text-align:center;letter-spacing:0.6px">event</span></div>
<div style="position:absolute;left:416.20px;top:670.66px;font:20.630px/26px 'Liberation Mono', monospace;white-space:pre;"><span style="color:#f9f9fa;">&lt;input </span><span style="display:inline-block;border:2px solid #dedee0;padding:0 1.75px;line-height:25px;vertical-align:0;margin:-6px 0 -2px 0"><span style="background:#0c0c0d;color:#f9f9fa;display:inline-block;padding-top:1.5px">id="</span><span style="color:#f9f9fa;display:inline-block;padding-top:1.5px">_wpm_gtin_code</span><span style="background:#0c0c0d;color:#f9f9fa;display:inline-block;padding-top:1.5px">"</span></span><span style="color:#f9f9fa;"> class=&quot;short&quot; type=&quot;text&quot;</span></div>
<div style="position:absolute;left:416.20px;top:696.66px;font:20.630px/26px 'Liberation Mono', monospace;white-space:pre;"><span style="color:#f9f9fa;">style=&quot;&quot; name=&quot;_wpm_gtin_code&quot; value=&quot;&quot;</span></div>
<div style="position:absolute;left:416.20px;top:722.66px;font:20.630px/26px 'Liberation Mono', monospace;white-space:pre;"><span style="color:#f9f9fa;">placeholder=&quot;&quot;&gt;</span></div>
<div style="position:absolute;left:416.20px;top:752.26px;font:20.630px/26px 'Liberation Mono', monospace;white-space:pre;"><span style="color:#c8c8cc;">::after</span></div>
<div style="position:absolute;left:395.90px;top:781.86px;font:20.630px/26px 'Liberation Mono', monospace;white-space:pre;"><span style="color:#b4b4b8;">&lt;/</span><span style="color:#75bfff;">p</span><span style="color:#b4b4b8;">&gt;</span></div>
<svg style="position:absolute;left:379.4px;top:814.2000000000002px;" width="11" height="17" viewBox="0 0 11 17"><path d="M0.5 0.5V16.5L10.5 8.5Z" fill="#8f8f92"/></svg>
<div style="position:absolute;left:395.90px;top:811.46px;font:20.630px/26px 'Liberation Mono', monospace;white-space:pre;"><span style="color:#b4b4b8;">&lt;</span><span style="color:#75bfff;">p</span><span style="color:#b4b4b8;"> </span><span style="color:#f27ade;">class</span><span style="color:#b4b4b8;">=&quot;</span><span style="color:#b98eff;">form-field _wpm_gtin_code_label_field </span><span style="color:#b4b4b8;">&quot;</span><span style="color:#b4b4b8;">&gt;</span><span style="display:inline-block;box-sizing:border-box;width:25.5px;height:17px;margin:0 4px 0 5.5px;border:2px solid #8e8e91;border-radius:4px;vertical-align:-1.5px;position:relative"><span style="position:absolute;left:9.5px;top:5.5px;width:3px;height:3px;background:#e0e0e2;border-radius:2px;box-shadow:-5px 0 #e0e0e2,5px 0 #e0e0e2"></span></span></div>
<div style="position:absolute;left:395.90px;top:841.06px;font:20.630px/26px 'Liberation Mono', monospace;white-space:pre;"><span style="color:#b4b4b8;">&lt;/</span><span style="color:#75bfff;">p</span><span style="color:#b4b4b8;">&gt;</span></div>
<div style="position:absolute;left:375.60px;top:870.66px;font:20.630px/26px 'Liberation Mono', monospace;white-space:pre;"><span style="color:#b4b4b8;">&lt;/</span><span style="color:#75bfff;">div</span><span style="color:#b4b4b8;">&gt;</span></div>
<svg style="position:absolute;left:359.1px;top:903.0000000000002px;" width="11" height="17" viewBox="0 0 11 17"><path d="M0.5 0.5V16.5L10.5 8.5Z" fill="#8f8f92"/></svg>
<div style="position:absolute;left:375.60px;top:900.26px;font:20.630px/26px 'Liberation Mono', monospace;white-space:pre;"><span style="color:#b4b4b8;">&lt;</span><span style="color:#75bfff;">p</span><span style="color:#b4b4b8;"> </span><span style="color:#f27ade;">class</span><span style="color:#b4b4b8;">=&quot;</span><span style="color:#b98eff;">form-field _manage_stock_field show_if_simple</span></div>
<div style="position:absolute;left:375.60px;top:926.26px;font:20.630px/26px 'Liberation Mono', monospace;white-space:pre;"><span style="color:#b98eff;">show_if_variable</span><span style="color:#b4b4b8;">&quot;</span><span style="color:#b4b4b8;"> </span><span style="color:#f27ade;">style</span><span style="color:#b4b4b8;">=&quot;</span><span style="color:#b98eff;">display: block;</span><span style="color:#b4b4b8;">&quot;</span><span style="color:#b4b4b8;">&gt;</span><span style="display:inline-block;box-sizing:border-box;width:25.5px;height:17px;margin:0 4px 0 5.5px;border:2px solid #8e8e91;border-radius:4px;vertical-align:-1.5px;position:relative"><span style="position:absolute;left:9.5px;top:5.5px;width:3px;height:3px;background:#e0e0e2;border-radius:2px;box-shadow:-5px 0 #e0e0e2,5px 0 #e0e0e2"></span></span><span style="color:#b4b4b8;">&lt;/</span><span style="color:#75bfff;">p</span><span style="color:#b4b4b8;">&gt;</span></div>
<svg style="position:absolute;left:359.1px;top:958.6000000000003px;" width="11" height="17" viewBox="0 0 11 17"><path d="M0.5 0.5V16.5L10.5 8.5Z" fill="#8f8f92"/></svg>
<div style="position:absolute;left:375.60px;top:955.86px;font:20.630px/26px 'Liberation Mono', monospace;white-space:pre;"><span style="color:#8f8f93;">&lt;</span><span style="color:#8f8f93;">div</span><span style="color:#8f8f93;"> </span><span style="color:#8f8f93;">class</span><span style="color:#8f8f93;">=&quot;</span><span style="color:#cfcfd3;">stock_fields show_if_simple show_if_variable</span><span style="color:#8f8f93;">&quot;</span></div>
<div style="position:absolute;left:375.60px;top:981.86px;font:20.630px/26px 'Liberation Mono', monospace;white-space:pre;"><span style="color:#8f8f93;">style</span><span style="color:#8f8f93;">=&quot;</span><span style="color:#cfcfd3;">display: none;</span><span style="color:#8f8f93;">&quot;</span><span style="color:#8f8f93;">&gt;</span><span style="display:inline-block;box-sizing:border-box;width:25.5px;height:17px;margin:0 4px 0 5.5px;border:2px solid #8e8e91;border-radius:4px;vertical-align:-1.5px;position:relative"><span style="position:absolute;left:9.5px;top:5.5px;width:3px;height:3px;background:#e0e0e2;border-radius:2px;box-shadow:-5px 0 #e0e0e2,5px 0 #e0e0e2"></span></span><span style="color:#8f8f93;">&lt;/</span><span style="color:#8f8f93;">div</span><span style="color:#8f8f93;">&gt;</span></div>
<svg style="position:absolute;left:359.1px;top:1014.2000000000003px;" width="11" height="17" viewBox="0 0 11 17"><path d="M0.5 0.5V16.5L10.5 8.5Z" fill="#8f8f92"/></svg>
<div style="position:absolute;left:375.60px;top:1011.46px;font:20.630px/26px 'Liberation Mono', monospace;white-space:pre;"><span style="color:#b4b4b8;">&lt;</span><span style="color:#75bfff;">p</span><span style="color:#b4b4b8;"> </span><span style="color:#f27ade;">class</span><span style="color:#b4b4b8;">=&quot;</span><span style="color:#b98eff;">stock_status_field hide_if_variable</span></div>
<div style="position:absolute;left:375.60px;top:1037.46px;font:20.630px/26px 'Liberation Mono', monospace;white-space:pre;"><span style="color:#b98eff;">hide_if_external hide_if_grouped form-field</span></div>
<div style="position:absolute;left:375.60px;top:1063.46px;font:20.630px/26px 'Liberation Mono', monospace;white-space:pre;"><span style="color:#b98eff;">_stock_status_field</span><span style="color:#b4b4b8;">&quot;</span><span style="color:#b4b4b8;">&gt;</span><span style="display:inline-block;box-sizing:border-box;width:25.5px;height:17px;margin:0 4px 0 5.5px;border:2px solid #8e8e91;border-radius:4px;vertical-align:-1.5px;position:relative"><span style="position:absolute;left:9.5px;top:5.5px;width:3px;height:3px;background:#e0e0e2;border-radius:2px;box-shadow:-5px 0 #e0e0e2,5px 0 #e0e0e2"></span></span><span style="color:#b4b4b8;">&lt;/</span><span style="color:#75bfff;">p</span><span style="color:#b4b4b8;">&gt;</span></div>
<div style="position:absolute;left:355.30px;top:1093.06px;font:20.630px/26px 'Liberation Mono', monospace;white-space:pre;"><span style="color:#b4b4b8;">&lt;/</span><span style="color:#75bfff;">div</span><span style="color:#b4b4b8;">&gt;</span></div>
<svg style="position:absolute;left:338.8px;top:1125.4px;" width="11" height="17" viewBox="0 0 11 17"><path d="M0.5 0.5V16.5L10.5 8.5Z" fill="#8f8f92"/></svg>
<div style="position:absolute;left:355.30px;top:1122.66px;font:20.630px/26px 'Liberation Mono', monospace;white-space:pre;"><span style="color:#b4b4b8;">&lt;</span><span style="color:#75bfff;">div</span><span style="color:#b4b4b8;"> </span><span style="color:#f27ade;">class</span><span style="color:#b4b4b8;">=&quot;</span><span style="color:#b98eff;">options_group show_if_simple show_if_variable</span><span style="color:#b4b4b8;">&quot;</span></div>
<div style="position:absolute;left:355.30px;top:1148.66px;font:20.630px/26px 'Liberation Mono', monospace;white-space:pre;"><span style="color:#f27ade;">style</span><span style="color:#b4b4b8;">=&quot;</span><span style="color:#b98eff;">display: block;</span><span style="color:#b4b4b8;">&quot;</span><span style="color:#b4b4b8;">&gt;</span><span style="display:inline-block;box-sizing:border-box;width:25.5px;height:17px;margin:0 4px 0 5.5px;border:2px solid #8e8e91;border-radius:4px;vertical-align:-1.5px;position:relative"><span style="position:absolute;left:9.5px;top:5.5px;width:3px;height:3px;background:#e0e0e2;border-radius:2px;box-shadow:-5px 0 #e0e0e2,5px 0 #e0e0e2"></span></span><span style="color:#b4b4b8;">&lt;/</span><span style="color:#75bfff;">div</span><span style="color:#b4b4b8;">&gt;</span></div>
<div style="position:absolute;left:335.00px;top:1178.26px;font:20.630px/26px 'Liberation Mono', monospace;white-space:pre;"><span style="color:#b4b4b8;">&lt;/</span><span style="color:#75bfff;">div</span><span style="color:#b4b4b8;">&gt;</span></div>
<svg style="position:absolute;left:318.5px;top:1210.6px;" width="11" height="17" viewBox="0 0 11 17"><path d="M0.5 0.5V16.5L10.5 8.5Z" fill="#8f8f92"/></svg>
<div style="position:absolute;left:335.00px;top:1207.86px;font:20.630px/26px 'Liberation Mono', monospace;white-space:pre;"><span style="color:#8f8f93;">&lt;</span><span style="color:#8f8f93;">div</span><span style="color:#8f8f93;"> </span><span style="color:#8f8f93;">id</span><span style="color:#8f8f93;">=&quot;</span><span style="color:#cfcfd3;">shipping_product_data</span><span style="color:#8f8f93;">&quot;</span><span style="color:#8f8f93;"> </span><span style="color:#8f8f93;">class</span><span style="color:#8f8f93;">=&quot;</span><span style="color:#cfcfd3;">panel</span></div>
<div style="position:absolute;left:335.00px;top:1233.86px;font:20.630px/26px 'Liberation Mono', monospace;white-space:pre;"><span style="color:#cfcfd3;">woocommerce options panel hidden</span><span style="color:#8f8f93;">&quot;</span><span style="color:#8f8f93;"> </span><span style="color:#8f8f93;">style</span><span style="color:#8f8f93;">=&quot;</span><span style="color:#cfcfd3;">display: none;</span><span style="color:#8f8f93;">&quot;</span><span style="color:#8f8f93;">&gt;</span><span style="display:inline-block;box-sizing:border-box;width:25.5px;height:17px;margin:0 4px 0 5.5px;border:2px solid #8e8e91;border-radius:4px;vertical-align:-1.5px;position:relative"><span style="position:absolute;left:9.5px;top:5.5px;width:3px;height:3px;background:#e0e0e2;border-radius:2px;box-shadow:-5px 0 #e0e0e2,5px 0 #e0e0e2"></span></span></div>
<div style="position:absolute;left:1140.00px;top:558.18px;font:normal normal 25.5px/25.5px 'Liberation Sans', sans-serif;color:#b1b1b3;letter-spacing:-1.407px;white-space:pre;">Pseudo-elements</div>
<svg style="position:absolute;left:1117px;top:563px;" width="16" height="20" viewBox="0 0 16 20"><path d="M2.5 2.5V17.5L13.5 10Z" fill="#8f8f92"/></svg>
<div style="position:absolute;left:1111.40px;top:604.98px;font:normal normal 25.5px/25.5px 'Liberation Sans', sans-serif;color:#d7d7db;letter-spacing:-1.429px;white-space:pre;">This Element</div>
<div style="position:absolute;left:1112.50px;top:650.26px;font:20.630px/26px 'Liberation Mono', monospace;white-space:pre;"><span style="color:#d9d9dc;">element {</span></div>
<svg style="position:absolute;left:1243.5px;top:648px;" width="26" height="26" viewBox="0 0 26 26"><rect x="6.5" y="6.5" width="13" height="13" rx="3.5" fill="none" stroke="#b1b1b3" stroke-width="3.6"/><path d="M13 2V6M13 20V24M2 13H6M20 13H24" stroke="#b1b1b3" stroke-width="2.6"/></svg>
<div style="position:absolute;left:1655.72px;top:650.26px;font:20.630px/26px 'Liberation Mono', monospace;white-space:pre;"><span style="color:#939395;">inline</span></div>
<div style="position:absolute;left:1112.50px;top:676.26px;font:20.630px/26px 'Liberation Mono', monospace;white-space:pre;"><span style="color:#d9d9dc;">}</span></div>
<div style="position:absolute;left:1112.50px;top:715.26px;font:20.630px/26px 'Liberation Mono', monospace;white-space:pre;"><span style="color:#d9d9dc;">.woocommerce_options_panel .short,</span></div>
<div style="position:absolute;left:1112.50px;top:741.26px;font:20.630px/26px 'Liberation Mono', monospace;white-space:pre;"><span style="color:#8f8f93;">.woocommerce_options_panel</span></div>
<div style="position:absolute;left:1112.50px;top:767.26px;font:20.630px/26px 'Liberation Mono', monospace;white-space:pre;"><span style="color:#8f8f93;">input[type=&quot;email&quot;].short,</span></div>
<div style="position:absolute;left:1112.50px;top:793.26px;font:20.630px/26px 'Liberation Mono', monospace;white-space:pre;"><span style="color:#8f8f93;">.woocommerce_options_panel</span></div>
<div style="position:absolute;left:1112.50px;top:819.26px;font:20.630px/26px 'Liberation Mono', monospace;white-space:pre;"><span style="color:#8f8f93;">input[type=&quot;number&quot;].short,</span></div>
<div style="position:absolute;left:1112.50px;top:845.26px;font:20.630px/26px 'Liberation Mono', monospace;white-space:pre;"><span style="color:#8f8f93;">.woocommerce_options_panel</span></div>
<div style="position:absolute;left:1112.50px;top:871.26px;font:20.630px/26px 'Liberation Mono', monospace;white-space:pre;"><span style="color:#8f8f93;">input[type=&quot;password&quot;].short,</span></div>
<div style="position:absolute;left:1112.50px;top:897.26px;font:20.630px/26px 'Liberation Mono', monospace;white-space:pre;"><span style="color:#d9d9dc;">.woocommerce_options_panel</span></div>
<div style="position:absolute;left:1112.50px;top:923.26px;font:20.630px/26px 'Liberation Mono', monospace;white-space:pre;"><span style="color:#d9d9dc;">input[type=&quot;text&quot;].short</span></div>
<div style="position:absolute;left:1593.82px;top:715.26px;font:20.630px/26px 'Liberation Mono', monospace;white-space:pre;"><span style="color:#939395;">admin.css:2</span></div>
<svg style="position:absolute;left:1418.5px;top:922px;" width="26" height="26" viewBox="0 0 26 26"><rect x="6.5" y="6.5" width="13" height="13" rx="3.5" fill="none" stroke="#b1b1b3" stroke-width="3.6"/><path d="M13 2V6M13 20V24M2 13H6M20 13H24" stroke="#b1b1b3" stroke-width="2.6"/></svg>
<div style="position:absolute;left:1458.00px;top:923.26px;font:20.630px/26px 'Liberation Mono', monospace;white-space:pre;"><span style="color:#d9d9dc;">{</span></div>
<div style="position:absolute;left:1148.80px;top:953.26px;font:20.630px/26px 'Liberation Mono', monospace;white-space:pre;"><span style="color:#75bfff;">width</span><span style="color:#d9d9dc;">: </span><span style="color:#f27ade;">50%</span><span style="color:#d9d9dc;">;</span></div>
<div style="position:absolute;left:1112.50px;top:979.26px;font:20.630px/26px 'Liberation Mono', monospace;white-space:pre;"><span style="color:#d9d9dc;">}</span></div>
<div style="position:absolute;left:1112.50px;top:1015.26px;font:20.630px/26px 'Liberation Mono', monospace;white-space:pre;"><span style="color:#8f8f93;">.woocommerce_options_panel</span></div>
<div style="position:absolute;left:1112.50px;top:1041.26px;font:20.630px/26px 'Liberation Mono', monospace;white-space:pre;"><span style="color:#8f8f93;">input[type=&quot;email&quot;],</span></div>
<div style="position:absolute;left:1112.50px;top:1067.26px;font:20.630px/26px 'Liberation Mono', monospace;white-space:pre;"><span style="color:#8f8f93;">.woocommerce_options_panel input[type=&quot;number&quot;],</span></div>
<div style="position:absolute;left:1112.50px;top:1093.26px;font:20.630px/26px 'Liberation Mono', monospace;white-space:pre;"><span style="color:#8f8f93;">.woocommerce_options_panel</span></div>
<div style="position:absolute;left:1112.50px;top:1119.76px;font:20.630px/26px 'Liberation Mono', monospace;white-space:pre;"><span style="color:#8f8f93;">input[type=&quot;password&quot;],</span></div>
<div style="position:absolute;left:1112.50px;top:1146.26px;font:20.630px/26px 'Liberation Mono', monospace;white-space:pre;"><span style="color:#d9d9dc;">.woocommerce_options_panel input[type=&quot;text&quot;]</span></div>
<div style="position:absolute;left:1593.82px;top:1015.26px;font:20.630px/26px 'Liberation Mono', monospace;white-space:pre;"><span style="color:#939395;">admin.css:2</span></div>
<svg style="position:absolute;left:1679px;top:1145px;" width="26" height="26" viewBox="0 0 26 26"><rect x="6.5" y="6.5" width="13" height="13" rx="3.5" fill="none" stroke="#b1b1b3" stroke-width="3.6"/><path d="M13 2V6M13 20V24M2 13H6M20 13H24" stroke="#b1b1b3" stroke-width="2.6"/></svg>
<div style="position:absolute;left:1112.50px;top:1174.26px;font:20.630px/26px 'Liberation Mono', monospace;white-space:pre;"><span style="color:#d9d9dc;">{</span></div>
<div style="position:absolute;left:1148.80px;top:1201.26px;font:20.630px/26px 'Liberation Mono', monospace;white-space:pre;"><span style="color:#8f8f93;text-decoration:line-through;text-decoration-thickness:2.5px">width: 50%;</span></div>
<svg style="position:absolute;left:1301px;top:1200px;" width="26" height="26" viewBox="0 0 26 26"><path d="M3 3H23L15.5 12V23L10.5 19V12Z" fill="none" stroke="#b1b1b3" stroke-width="2.8" stroke-linejoin="round"/></svg>
<div style="position:absolute;left:1150.50px;top:1231.86px;font:20.630px/26px 'Liberation Mono', monospace;white-space:pre;"><span style="color:#75bfff;">float</span><span style="color:#d9d9dc;">: </span><span style="color:#f27ade;">left</span><span style="color:#d9d9dc;">;</span></div>
<div style="position:absolute;left:1112.50px;top:1258.26px;font:20.630px/26px 'Liberation Mono', monospace;white-space:pre;"><span style="color:#d9d9dc;">}</span></div>
<svg style="position:absolute;left:1769.5px;top:566.5px;" width="18" height="12" viewBox="0 0 18 12"><path d="M1 1H17L9 11Z" fill="#8f8f92"/></svg>
<div style="position:absolute;left:1793.00px;top:558.16px;font:normal normal 26px/26px 'Liberation Sans', sans-serif;color:#d7d7db;letter-spacing:-1.506px;white-space:pre;">Flexbox</div>
<div style="position:absolute;left:1796.60px;top:609.58px;font:italic normal 25.5px/25.5px 'Liberation Sans', sans-serif;color:#d7d7db;letter-spacing:-1.462px;white-space:pre;">Select a Flex container or item to continue.</div>
<svg style="position:absolute;left:1769.5px;top:667px;" width="18" height="12" viewBox="0 0 18 12"><path d="M1 1H17L9 11Z" fill="#8f8f92"/></svg>
<div style="position:absolute;left:1795.00px;top:659.36px;font:normal normal 26px/26px 'Liberation Sans', sans-serif;color:#d7d7db;letter-spacing:-1.886px;white-space:pre;">Grid</div>
<div style="position:absolute;left:1797.70px;top:717.76px;font:normal bold 23.5px/23.5px 'Liberation Sans', sans-serif;color:#d7d7db;letter-spacing:-1.583px;white-space:pre;">Overlay Grid</div>
<div style="position:absolute;left:1798.5px;top:762px;width:27.5px;height:27.5px;background:#2c2b35;border:3.5px solid #a6a6ad;border-radius:5px;"></div>
<div style="position:absolute;left:1837.5px;top:764.56px;font:20.630px/26px 'Liberation Mono', monospace;white-space:pre"><span style="color:#75bfff">div</span><span style="color:#f27ade">.woocommerce-card__header</span></div>
<svg style="position:absolute;left:2192px;top:762px;" width="27" height="27" viewBox="0 0 27 27"><rect x="7" y="7" width="13" height="13" rx="3.5" fill="none" stroke="#d7d7db" stroke-width="3.6"/><path d="M13.5 2V6M13.5 21V25M2 13.5H6M21 13.5H25" stroke="#d7d7db" stroke-width="2.6"/></svg>
<svg style="position:absolute;left:2222px;top:762px;" width="28" height="28" viewBox="0 0 28 28"><circle cx="14" cy="14" r="12" fill="#9400ff" stroke="#e6d5ff" stroke-width="2"/></svg>
<div style="position:absolute;left:1797.70px;top:820.96px;font:normal bold 23.5px/23.5px 'Liberation Sans', sans-serif;color:#d7d7db;letter-spacing:-1.630px;white-space:pre;">Grid Display Settings</div>
<div style="position:absolute;left:1798.5px;top:865px;width:27.5px;height:27.5px;background:#2c2b35;border:3.5px solid #a6a6ad;border-radius:5px;"></div>
<div style="position:absolute;left:1837.90px;top:865.06px;font:normal normal 23.5px/23.5px 'Liberation Sans', sans-serif;color:#d7d7db;letter-spacing:-1.256px;white-space:pre;">Display line numbers</div>
<div style="position:absolute;left:1798.5px;top:913.5px;width:27.5px;height:27.5px;background:#2c2b35;border:3.5px solid #a6a6ad;border-radius:5px;"></div>
<div style="position:absolute;left:1837.90px;top:913.46px;font:normal normal 23.5px/23.5px 'Liberation Sans', sans-serif;color:#d7d7db;letter-spacing:-1.643px;white-space:pre;">Display area names</div>
<div style="position:absolute;left:1798.5px;top:962px;width:27.5px;height:27.5px;background:#2c2b35;border:3.5px solid #a6a6ad;border-radius:5px;"></div>
<div style="position:absolute;left:1837.90px;top:962.56px;font:normal normal 23.5px/23.5px 'Liberation Sans', sans-serif;color:#d7d7db;letter-spacing:-0.818px;white-space:pre;">Extend lines infinitely</div>
<svg style="position:absolute;left:1769.5px;top:1037.5px;" width="18" height="12" viewBox="0 0 18 12"><path d="M1 1H17L9 11Z" fill="#8f8f92"/></svg>
<div style="position:absolute;left:1793.50px;top:1028.88px;font:normal normal 25.5px/25.5px 'Liberation Sans', sans-serif;color:#d7d7db;letter-spacing:-1.039px;white-space:pre;">Box Model</div>
<div style="position:absolute;left:1829px;top:1112px;width:489px;height:170px;background:#757548;border:2px dotted #e8e800;"></div>
<div style="position:absolute;left:1846.00px;top:1123.56px;font:20.630px/26px 'Liberation Mono', monospace;white-space:pre;color:#e8e8ea">margin</div>
<div style="position:absolute;left:2065.00px;top:1118.76px;font:20.630px/26px 'Liberation Mono', monospace;white-space:pre;color:#e8e8ea">0</div>
<div style="position:absolute;left:1872.7px;top:1155px;width:402.3px;height:140px;background:#6a55a6;border:8.5px solid #3a3a3f;border-bottom:none;"></div>
<div style="position:absolute;left:1875px;top:1155px;width:86px;height:27px;background:#3a3a3f;border-radius:0 0 6px 0;"></div>
<div style="position:absolute;left:1879.00px;top:1159.76px;font:20.630px/26px 'Liberation Mono', monospace;white-space:pre;color:#f0f0f2">border</div>
<div style="position:absolute;left:2060.5px;top:1146.5px;width:22px;height:28.5px;background:#3a3a3f;border-radius:6px;"></div>
<div style="position:absolute;left:2065.00px;top:1152.26px;font:20.630px/26px 'Liberation Mono', monospace;white-space:pre;color:#e8e8ea">1</div>
<div style="position:absolute;left:1903.00px;top:1189.26px;font:20.630px/26px 'Liberation Mono', monospace;white-space:pre;color:#e8e8ea">padding</div>
<div style="position:absolute;left:2065.00px;top:1182.76px;font:20.630px/26px 'Liberation Mono', monospace;white-space:pre;color:#e8e8ea">0</div>
<div style="position:absolute;left:1930px;top:1213px;width:287.5px;height:36.5px;background:#4478a8;border:2px dotted #1ab8ff;"></div>
<div style="position:absolute;left:2034.00px;top:1221.26px;font:20.630px/26px 'Liberation Mono', monospace;white-space:pre;color:#e8e8ea">203×28</div>
<div style="position:absolute;left:1842.00px;top:1221.26px;font:20.630px/26px 'Liberation Mono', monospace;white-space:pre;color:#e8e8ea">0</div>
<div style="position:absolute;left:1865px;top:1217px;width:23px;height:27.5px;background:#3a3a3f;border-radius:6px;"></div>
<div style="position:absolute;left:1870.50px;top:1221.26px;font:20.630px/26px 'Liberation Mono', monospace;white-space:pre;color:#e8e8ea">1</div>
<div style="position:absolute;left:1902.00px;top:1221.26px;font:20.630px/26px 'Liberation Mono', monospace;white-space:pre;color:#e8e8ea">8</div>
<div style="position:absolute;left:2233.00px;top:1221.26px;font:20.630px/26px 'Liberation Mono', monospace;white-space:pre;color:#e8e8ea">8</div>
<div style="position:absolute;left:2259.5px;top:1217px;width:22px;height:27.5px;background:#3a3a3f;border-radius:6px;"></div>
<div style="position:absolute;left:2264.50px;top:1221.26px;font:20.630px/26px 'Liberation Mono', monospace;white-space:pre;color:#e8e8ea">1</div>
<div style="position:absolute;left:2293.00px;top:1221.26px;font:20.630px/26px 'Liberation Mono', monospace;white-space:pre;color:#e8e8ea">0</div>
<div style="position:absolute;left:2065.00px;top:1258.26px;font:20.630px/26px 'Liberation Mono', monospace;white-space:pre;color:#e8e8ea">0</div>
</body></html>
